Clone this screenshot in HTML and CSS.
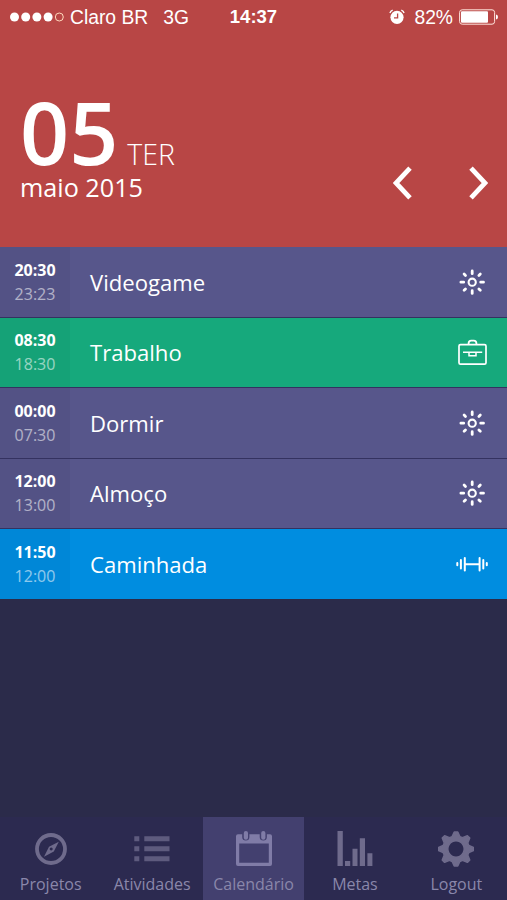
FILE: index.html
```html
<!DOCTYPE html>
<html lang="pt-BR">

<head>
    <meta charset="UTF-8">
    <title>Calendário</title>
    <link rel="stylesheet" href="styles.css">
</head>

<body>
    <!-- shared icon used by the leisure activities -->
    <svg class="defs">
        <symbol id="sun" viewBox="0 0 32 32">
            <circle cx="16.2" cy="16.2" r="3.6" stroke-width="2.1" />
            <path stroke-width="2.8" stroke-linecap="round" d="M16.2 5v2.7M16.2 24.7v2.7M4.9 16.2h2.8M24.7 16.2h2.8M8.1 8.1l1.4 1.4M22.9 22.9l1.4 1.4M24.3 8.1l-1.4 1.4M9.5 22.9l-1.4 1.4" />
        </symbol>
    </svg>

    <header class="header">
        <div class="status-bar">
            <div class="status-left">
                <svg class="signal" width="54" height="10" viewBox="0 0 54 10">
                    <circle cx="4.5" cy="5" r="4.5" />
                    <circle cx="15.7" cy="5" r="4.5" />
                    <circle cx="26.9" cy="5" r="4.5" />
                    <circle cx="38.1" cy="5" r="4.5" />
                    <circle class="empty" cx="49.3" cy="5" r="4" />
                </svg>
                <span class="carrier">Claro BR</span>
                <span class="network">3G</span>
            </div>
            <span class="clock">14:37</span>
            <div class="status-right">
                <svg class="alarm" width="16" height="16" viewBox="0 0 16 16">
                    <circle cx="8" cy="8.3" r="6.6" fill="#fff" />
                    <path d="M.9 4Q1.5 1.8 3.7 1.1M15.1 4Q14.5 1.8 12.3 1.1" stroke="#fff" stroke-width="1.3" />
                    <path d="M8.6 4.4v4.4H5" stroke="#b84645" stroke-width="1.3" />
                </svg>
                <span class="percent">82%</span>
                <svg class="battery" width="40" height="16" viewBox="0 0 40 16">
                    <rect x=".6" y=".8" width="35" height="14.4" rx="2.6" stroke="#ffe4dc" stroke-width="1" />
                    <rect x="2" y="2.2" width="27" height="11.6" rx="1" fill="#fff" />
                    <path d="M37 5.5q2 .4 2 2.5t-2 2.5z" fill="#fff" />
                </svg>
            </div>
        </div>

        <div class="date-row">
            <div class="date">
                <div class="day"><span class="day-number">05</span><span class="weekday">TER</span></div>
                <div class="month">maio 2015</div>
            </div>
            <div class="arrows">
                <svg width="20" height="34" viewBox="0 0 20 34">
                    <path d="M17 2.2L3 17l14 14.8" />
                </svg>
                <svg width="20" height="34" viewBox="0 0 20 34">
                    <path d="M3 2.2L17 17 3 31.8" />
                </svg>
            </div>
        </div>
    </header>

    <ul class="schedule">
        <li class="item purple">
            <div class="time"><b>20:30</b><span>23:23</span></div>
            <div class="name">Videogame</div>
            <svg class="icon"><use href="#sun" /></svg>
        </li>
        <li class="item green">
            <div class="time"><b>08:30</b><span>18:30</span></div>
            <div class="name">Trabalho</div>
            <svg class="icon" viewBox="0 0 32 32">
                <rect x="3" y="8.6" width="27" height="19.6" rx="1.5" stroke-width="1.7" />
                <path stroke-width="1.8" d="M12.6 8.4V7.2q0-2.6 2.6-2.6h2.6q2.6 0 2.6 2.6v1.2" />
                <path stroke-width="1.5" d="M7 16.3h19.2M13 16.6v3.2h7v-3.2" />
            </svg>
        </li>
        <li class="item purple">
            <div class="time"><b>00:00</b><span>07:30</span></div>
            <div class="name">Dormir</div>
            <svg class="icon"><use href="#sun" /></svg>
        </li>
        <li class="item purple">
            <div class="time"><b>12:00</b><span>13:00</span></div>
            <div class="name">Almoço</div>
            <svg class="icon"><use href="#sun" /></svg>
        </li>
        <li class="item blue">
            <div class="time"><b>11:50</b><span>12:00</span></div>
            <div class="name">Caminhada</div>
            <svg class="icon" viewBox="0 0 32 32">
                <path stroke-width="2" stroke-linecap="round" d="M8.8 10v12.4M23.6 10v12.4M4.9 12v8.4M27.3 12v8.4M1.3 14.9v2.4M30.8 14.9v2.4M9 16.2h14" />
            </svg>
        </li>
    </ul>

    <nav class="tabs">
        <a class="tab">
            <svg viewBox="0 0 36 36">
                <circle cx="18" cy="18" r="14" fill="none" stroke="currentColor" stroke-width="3.8" />
                <path fill-rule="evenodd" d="M25.8 10.7l-5 9.8-9.8 5.2 5-10zM18.2 16.6a1.5 1.5 0 1 0 .01 0z" />
            </svg>
            <span>Projetos</span>
        </a>
        <a class="tab">
            <svg class="list" viewBox="0 0 36 36">
                <path d="M.3 5.3h5v5h-5zM10.3 5.3h25.2v5H10.3zM.3 15.3h5v5h-5zM10.3 15.3h25.2v5H10.3zM.3 25.3h5v5h-5zM10.3 25.3h25.2v5H10.3z" />
            </svg>
            <span>Atividades</span>
        </a>
        <a class="tab active">
            <svg viewBox="0 0 36 36">
                <path fill-rule="evenodd" d="M2 3.3h4.2V6a3.6 3.6 0 0 0 7.2 0V3.3h10.3V6a3.6 3.6 0 0 0 7.2 0V3.3H34a2 2 0 0 1 2 2V33a2 2 0 0 1-2 2H2a2 2 0 0 1-2-2V5.3a2 2 0 0 1 2-2zM3.2 12.4v19.4h29.6V12.4z" />
                <rect x="7.8" y="0" width="4.2" height="8.8" rx="2.1" />
                <rect x="25.2" y="0" width="4.2" height="8.8" rx="2.1" />
            </svg>
            <span>Calendário</span>
        </a>
        <a class="tab">
            <svg viewBox="0 0 36 36">
                <path d="M.5 0h5.3v35H.5zM8 30h5.2v5H8zM15.5 17.7h5V35h-5zM22.8 7.2H28V35h-5.2zM30.4 22.3h5V35h-5z" />
            </svg>
            <span>Metas</span>
        </a>
        <a class="tab">
            <svg viewBox="0 0 36 36">
                <path fill-rule="evenodd" d="M16.2 1h3.6l2.1 4.6 2.6 1.1 4.9-2 2.4 2.4-2 4.9 1.1 2.5 4.5 1.9v3.2l-4.5 1.9-1.1 2.6 2 4.9-2.4 2.4-4.9-2-2.6 1.1-2.1 4.5h-3.6l-2.1-4.5-2.6-1.1-4.9 2-2.4-2.4 2-4.9-1.1-2.6-4.5-1.9v-3.2l4.5-1.9 1.1-2.5-2-4.9 2.4-2.4 4.9 2 2.6-1.1zM18 9.9a8.1 8.1 0 1 0 .01 0z" stroke="currentColor" stroke-width="1.4" stroke-linejoin="round" />
            </svg>
            <span>Logout</span>
        </a>
    </nav>
</body>

</html>
```
FILE: styles.css
```css
* {
    box-sizing: border-box;
}

body {
    display: flex;
    flex-direction: column;
    height: 900px;
    margin: 0;
    overflow: hidden;
    background-color: #2b2b4a;
    color: #fff;
    font-family: "Open Sans", sans-serif;
}

svg {
    display: block;
    fill: none;
    flex-shrink: 0;
}

.defs {
    width: 0;
    height: 0;
    position: absolute;
}

.header {
    height: 247px;
    background-color: #b84645;
}

.status-bar {
    display: grid;
    grid-template-columns: 1fr auto 1fr;
    align-items: center;
    height: 32px;
    padding: 0 8px 0 10px;
    font-family: "Liberation Sans", Arial, sans-serif;
    font-size: 19.3px;
    line-height: 32px;
}

.status-left,
.status-right {
    display: flex;
    align-items: center;
}

.status-left span,
.percent {
    padding-top: 2px;
    line-height: 30px;
}

.status-right {
    justify-content: flex-end;
}

.signal {
    fill: #fff;
}

.signal .empty {
    fill: none;
    stroke: #ffd9bd;
}

.carrier {
    margin-left: 6px;
}

.network {
    margin-left: 15px;
}

.clock {
    margin-right: 2px;
    padding-top: 1px;
    font-size: 18.5px;
    font-weight: bold;
}

.percent {
    margin: 0 6px 0 9px;
}

.date-row {
    display: flex;
    justify-content: space-between;
    padding: 58px 19px 0 20px;
}

.day {
    display: flex;
    align-items: baseline;
    height: 82px;
    line-height: 84px;
}

.day-number {
    font-size: 86px;
    font-weight: 600;
}

.weekday {
    margin-left: 9px;
    font-size: 28.5px;
    font-weight: 300;
}

.month {
    font-size: 25.2px;
    line-height: 30px;
}

.arrows {
    display: flex;
    gap: 55px;
    padding-top: 76px;
}

.arrows path {
    stroke: #fff;
    stroke-width: 4.8;
}

.schedule {
    flex: 1;
    margin: 0;
    padding: 0;
    list-style: none;
}

.item {
    display: flex;
    align-items: center;
    height: 70.5px;
    padding-right: 19px;
    border-bottom: 1px solid #343260;
}

.item:last-child {
    border-bottom: none;
    height: 70px;
}

.purple {
    background-color: #57568b;
}

.green {
    background-color: #16a97c;
}

.blue {
    background-color: #008de0;
}

.time {
    display: flex;
    flex-direction: column;
    justify-content: center;
    width: 70px;
    height: 100%;
    background-color: rgba(0, 0, 0, 0.04);
    font-size: 16px;
    line-height: 24px;
    text-align: center;
}

.time span {
    opacity: 0.55;
}

.name {
    flex: 1;
    padding-left: 20px;
    font-size: 22.1px;
}

.icon {
    width: 32px;
    height: 32px;
    stroke: #fff;
}

.tabs {
    display: flex;
    height: 83px;
    background-color: #2c2a50;
}

.tab {
    display: flex;
    flex: 1;
    flex-direction: column;
    align-items: center;
    padding-top: 14px;
    color: #6f6b8c;
    font-size: 16px;
}

.tab svg {
    width: 36px;
    height: 36px;
    fill: currentColor;
}

.tab .list {
    color: #5e5b7e;
}

.tab span {
    margin-top: 6px;
    color: #8a87aa;
    line-height: 22px;
}

.active {
    background-color: #43406f;
    color: #807ca7;
}
```
